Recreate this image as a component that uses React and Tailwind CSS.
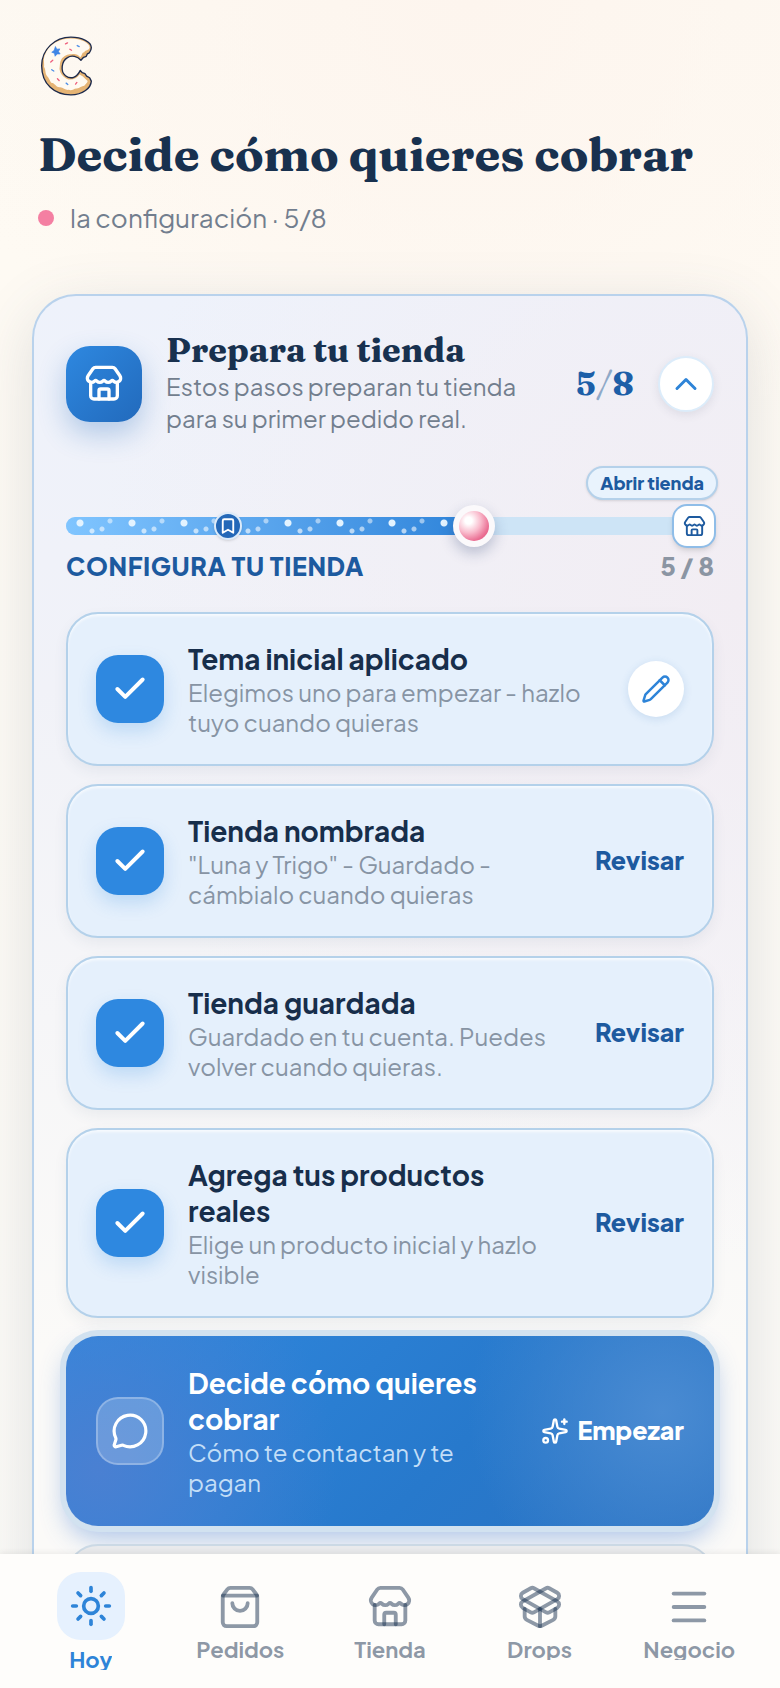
import {
  Bookmark,
  Check,
  ChevronUp,
  Menu,
  MessageCircle,
  PackageOpen,
  Pencil,
  ShoppingBag,
  Sparkles,
  Store,
  Sun,
} from "lucide-react";

const steps = [
  {
    title: "Tema inicial aplicado",
    text: "Elegimos uno para empezar - hazlo tuyo cuando quieras",
    edit: true,
  },
  {
    title: "Tienda nombrada",
    text: '"Luna y Trigo" - Guardado - cámbialo cuando quieras',
  },
  {
    title: "Tienda guardada",
    text: "Guardado en tu cuenta. Puedes volver cuando quieras.",
  },
  {
    title: "Agrega tus productos reales",
    text: "Elige un producto inicial y hazlo visible",
  },
];

const tabs = [
  { label: "Hoy", icon: Sun, active: true },
  { label: "Pedidos", icon: ShoppingBag },
  { label: "Tienda", icon: Store },
  { label: "Drops", icon: PackageOpen },
  { label: "Negocio", icon: Menu },
];

function Logo() {
  return (
    <svg viewBox="30 34 158 178" className="ml-0.5 h-[60px] w-[53px]" role="img" aria-label="Inicio">
      <path
        d="M152 106 C142 94 124 90 112 98 C94 108 90 140 106 152 C122 164 140 158 150 136 L156 143 L164 146 L169 153 L178 158 L183 168 C182 188 158 209 122 209 C74 209 35 178 35 122 C35 74 74 37 122 37 C156 37 183 52 183 68 C183 76 180 80 177 84 L171 87 L168 94 L160 97 Z"
        fill="#e5b475"
        stroke="#1c2a4c"
        strokeWidth="4"
        strokeLinejoin="round"
      />
      <path
        d="M150 97 C142 86 132 86 124 88 C110 88 104 92 98 98 C88 108 90 120 88 132 C90 146 98 154 108 160 C122 168 138 162 148 148 L158 154 L168 164 L172 168 C172 174 166 176 162 182 C154 182 148 190 140 190 C132 188 126 198 116 194 C106 196 100 186 90 186 C80 188 76 178 68 174 C60 174 60 162 52 154 C44 146 48 134 42 126 C44 116 39 104 44 92 C56 58 88 41 122 41 C152 41 178 54 178 68 C176 78 166 74 162 82 C154 82 156 92 150 97 Z"
        fill="#fffaf1"
      />
      <path d="M76 65 l4 8 9 -1 -4 8 5 7 -9 0 -6 7 -2 -9 -8 -3 7 -5 Z" fill="#3f86e6" stroke="#3f86e6" strokeWidth="2" />
      <g strokeWidth="4" strokeLinecap="round">
        <path d="M106 57l6-3M119 73l5 3M62 111l6-5M82 161l5 5M136 177l4-5" stroke="#ee5f7d" />
        <path d="M141 62l6 3M65 134l6 4M108 174l5 4" stroke="#4d8fe8" />
      </g>
    </svg>
  );
}

function Progress() {
  return (
    <div className="mt-7">
      <div className="-mr-1 flex justify-end">
        <span className="rounded-full border-2 border-[#b5d1ea] bg-[#e9f3fd] px-3 text-[18px] font-extrabold leading-[30px] text-[#1d5a9f] shadow-sm">
          Abrir tienda
        </span>
      </div>
      <div className="relative mt-1 flex h-11 items-center">
        <div className="h-[18px] w-full overflow-hidden rounded-full bg-[#cde4f6]">
          <div className="h-full w-5/8 bg-linear-to-r from-[#80c5ff] to-[#2e84da]">
            <div className="h-full bg-[radial-gradient(circle_at_14px_6px,#e3f3ff_3px,transparent_4px),radial-gradient(circle_at_26px_14px,#ffffffa0_2px,transparent_3px),radial-gradient(circle_at_36px_12px,#ffffff90_2px,transparent_3px),radial-gradient(circle_at_44px_4px,#ffffff80_2px,transparent_3px)] bg-[length:52px_18px]" />
          </div>
        </div>
        <span className="absolute left-1/4 flex size-7 -translate-x-1/2 items-center justify-center rounded-full border-2 border-[#dcebfa] bg-[#2468b8] text-white shadow">
          <Bookmark size={18} strokeWidth={2.5} />
        </span>
        <span className="absolute left-[63%] flex size-[42px] -translate-x-1/2 items-center justify-center rounded-full bg-[#fbf9fb] shadow-[0_6px_14px_rgba(40,60,110,0.28)]">
          <span className="size-[30px] rounded-full bg-[radial-gradient(circle_at_32%_32%,#ffffff_12%,#f9bccd_42%,#ea6d92_72%,#d8527c_100%)]" />
        </span>
        <span className="absolute -right-0.5 flex size-11 items-center justify-center rounded-[15px] border-2 border-[#8fbde8] bg-white text-[#1d5a9f] shadow-md">
          <Store size={23} />
        </span>
      </div>
      <div className="mt-1 flex items-center justify-between text-[25px] font-extrabold leading-7">
        <span className="tracking-wide text-[#1d5a9f]">CONFIGURA TU TIENDA</span>
        <span className="text-[#8b95a3]">5 / 8</span>
      </div>
    </div>
  );
}

function StepCard({ step }) {
  return (
    <li className="flex items-center gap-6 rounded-[32px] border-2 border-[#b4d1ea] bg-[#e5f0fc] px-7 py-[27px] shadow-[inset_0_2px_3px_rgba(255,255,255,0.7),0_6px_14px_rgba(60,80,110,0.07)]">
      <span className="flex size-[68px] shrink-0 items-center justify-center rounded-[22px] bg-[#2e88e0] text-white shadow-[0_8px_18px_rgba(46,136,224,0.22)]">
        <Check size={38} strokeWidth={2.5} />
      </span>
      <div className="min-w-0 flex-1">
        <h3 className="text-[28px] font-bold leading-9 text-[#172e4b]">{step.title}</h3>
        <p className="text-[24px] leading-[30px] text-[#8794a4]">{step.text}</p>
      </div>
      {step.edit ? (
        <button
          type="button"
          aria-label="Editar"
          className="flex size-14 shrink-0 items-center justify-center rounded-full bg-white text-[#2e84d8] shadow-[0_2px_8px_rgba(46,110,180,0.16)]"
        >
          <Pencil size={30} />
        </button>
      ) : (
        <button type="button" className="shrink-0 pl-4 text-[25px] font-extrabold text-[#1d5a9f]">
          Revisar
        </button>
      )}
    </li>
  );
}

function TabBar() {
  return (
    <nav className="relative grid h-[134px] shrink-0 grid-cols-5 bg-[#fefdfb] px-4 shadow-[0_-2px_5px_rgba(60,60,60,0.07)]">
      {tabs.map(({ label, icon: Icon, active }) => (
        <a
          key={label}
          href="#"
          className={`flex flex-col items-center text-[22px] font-bold ${active ? "pt-[18px] text-[#2e84d8]" : "pt-[30px] text-[#1c3451]/50"}`}
        >
          {active ? (
            <span className="flex size-[68px] items-center justify-center rounded-3xl bg-[#e6f1fe]">
              <Icon size={44} />
            </span>
          ) : (
            <Icon size={46} />
          )}
          <span className="mt-2 max-w-full truncate leading-none">{label}</span>
        </a>
      ))}
    </nav>
  );
}

export default function App() {
  return (
    <div className="flex h-screen flex-col overflow-hidden bg-[#fefaf3] bg-[radial-gradient(circle_at_60%_0%,#fdf5ee,transparent_30%),linear-gradient(180deg,#fdf9f2,#fefaf3_15%,#fbfaf7)] font-['Plus_Jakarta_Sans','Inter',sans-serif]">
      <main className="min-h-0 flex-1 overflow-y-auto [scrollbar-width:none]">
        <header className="px-[38px] pt-9">
          <Logo />
          <h1 className="mt-[26px] font-['Fraunces','Liberation_Serif',serif] text-[47px] font-bold leading-[64px] text-[#18314f]">
            Decide cómo quieres cobrar
          </h1>
          <p className="mt-3.5 flex items-center gap-4 text-[26px] leading-9 text-[#727e8e]">
            <span className="size-4 rounded-full bg-[#f47fa2]" />
            la configuración · 5/8
          </p>
        </header>

        <section className="mx-8 mt-[58px] rounded-t-[44px] border-2 border-b-0 border-[#b9d2ec] bg-[radial-gradient(circle_at_100%_22%,#f2edf3,transparent_50%),linear-gradient(180deg,#eef2fb_0%,#f1f2f8_28%,#fbfaf8_75%)] px-8 pt-[34px] shadow-[0_16px_60px_rgba(70,90,110,0.17)]">
          <div className="flex items-center">
            <span className="flex size-[76px] shrink-0 items-center justify-center rounded-3xl bg-linear-to-br from-[#2e88e0] to-[#226abc] text-white shadow-[0_12px_28px_rgba(36,106,188,0.3)]">
              <Store size={40} />
            </span>
            <div className="ml-6 min-w-0 flex-1 pb-1">
              <h2 className="font-['Fraunces','Liberation_Serif',serif] text-[34px] font-bold leading-10 text-[#18314f]">
                Prepara tu tienda
              </h2>
              <p className="text-[24px] leading-8 text-[#727e8e]">
                Estos pasos preparan tu tienda para su primer pedido real.
              </p>
            </div>
            <span className="ml-6 font-['Fraunces','Liberation_Serif',serif] text-[33px] font-bold text-[#1d5fa8]">
              5<span className="font-normal text-[#8fa9c8]">/</span>8
            </span>
            <button
              type="button"
              aria-label="Contraer"
              className="ml-6 flex size-14 shrink-0 items-center justify-center rounded-full border-2 border-[#dcecfa] bg-white text-[#2e84d8] shadow-[0_3px_10px_rgba(50,60,90,0.1)]"
            >
              <ChevronUp size={36} />
            </button>
          </div>

          <Progress />

          <ul className="mt-8 flex flex-col gap-[18px]">
            {steps.map((step) => (
              <StepCard key={step.title} step={step} />
            ))}

            {/* current step */}
            <li className="flex items-center gap-6 rounded-[32px] bg-[radial-gradient(circle_at_92%_40%,#4a8bd2,transparent_32%),radial-gradient(circle_at_5%_70%,#4a80d2,transparent_38%),linear-gradient(135deg,#3088de,#2779cc_60%,#2b72c2)] px-[30px] py-[29px] text-white shadow-[0_0_0_6px_#d2e2f0,0_12px_26px_rgba(60,120,210,0.42)]">
              <span className="flex size-[68px] shrink-0 items-center justify-center rounded-[22px] border-2 border-white/25 bg-white/20">
                <MessageCircle size={38} />
              </span>
              <div className="min-w-0 flex-1">
                <h3 className="text-[28px] font-bold leading-9">Decide cómo quieres cobrar</h3>
                <p className="text-[24px] leading-[30px] text-[#c3def7]">Cómo te contactan y te pagan</p>
              </div>
              <button type="button" className="flex shrink-0 items-center gap-2 text-[25px] font-extrabold">
                <Sparkles size={28} />
                Empezar
              </button>
            </li>

            <li className="h-[154px] rounded-[32px] border-2 border-[#cbd9e5] bg-[#e9eaec]" />
          </ul>
        </section>
      </main>

      <TabBar />
    </div>
  );
}
